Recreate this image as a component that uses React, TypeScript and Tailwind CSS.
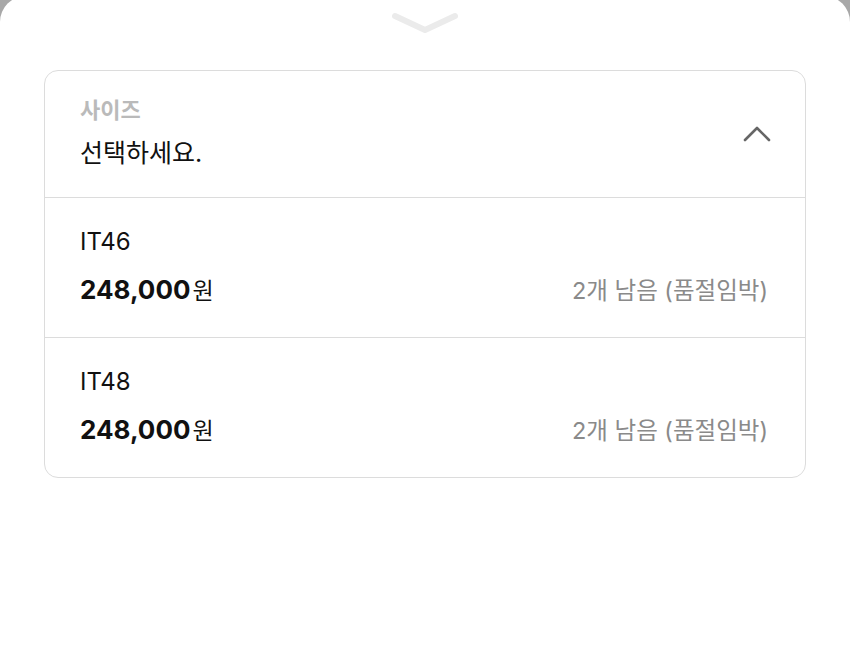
import React from "react";

const font = { fontFamily: 'Inter, "Noto Sans CJK KR", "Noto Sans", sans-serif' };

const options = [
  { name: "IT46", price: "248,000", stock: "2개 남음 (품절임박)" },
  { name: "IT48", price: "248,000", stock: "2개 남음 (품절임박)" },
];

const App = () => {
  return (
    <div className="w-[850px] h-[648px] overflow-hidden bg-[#a8a8a8]" style={font}>
      <div className="-mt-[4px] h-[660px] rounded-t-[26px] bg-white pt-[4px]">
        <div className="flex justify-center pt-[12px]">
          <svg width="66" height="22" viewBox="0 0 66 22" fill="none">
            <path
              d="M3 4 L33 18 L63 4"
              stroke="#ebebeb"
              strokeWidth="6"
              strokeLinecap="round"
              strokeLinejoin="round"
            />
          </svg>
        </div>

        <div className="mx-[44px] mt-[36px] rounded-[14px] border-[1.5px] border-[#dcdcdc]">
          <div className="flex h-[126px] items-center justify-between pl-[35px] pr-[34px]">
            <div className="-mt-[4px]">
              <div className="text-[22px] leading-[28px] font-semibold text-[#bababa]">사이즈</div>
              <div className="mt-[14px] text-[25px] leading-[30px] text-[#111]">선택하세요.</div>
            </div>
            <svg width="28" height="18" viewBox="0 0 28 18" fill="none">
              <path
                d="M2 15 L14 3 L26 15"
                stroke="#666"
                strokeWidth="2.6"
                strokeLinecap="round"
                strokeLinejoin="round"
              />
            </svg>
          </div>

          {options.map((o) => (
            <div
              key={o.name}
              className="h-[140px] border-t-[1.5px] border-[#dcdcdc] pl-[35px] pr-[37px] pt-[29px]"
            >
              <div className="text-[24px] leading-[30px] text-[#111]">{o.name}</div>
              <div className="mt-[16px] flex items-baseline justify-between">
                <div className="leading-[30px] text-[#111]">
                  <span className="text-[26px] font-bold">{o.price}</span>
                  <span className="ml-[2px] text-[23px]">원</span>
                </div>
                <div className="text-[23.5px] text-[#8a8a8a]">{o.stock}</div>
              </div>
            </div>
          ))}
        </div>
      </div>
    </div>
  );
};

export default App;
